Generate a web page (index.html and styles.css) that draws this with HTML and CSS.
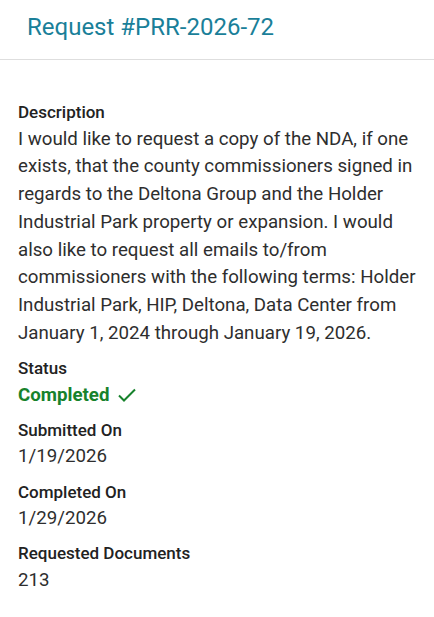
FILE: index.html
```html
<!DOCTYPE html>
<html>
<head>
<meta charset="utf-8">
<link rel="stylesheet" href="styles.css">
</head>
<body>
<header class="header">
  <h1 class="title">Request #PRR-2026-72</h1>
</header>
<main class="content">
  <div class="field">
    <div class="label">Description</div>
    <div class="value">I would like to request a copy of the NDA, if one exists, that the county commissioners signed in regards to the Deltona Group and the Holder Industrial Park property or expansion. I would also like to request all emails to/from commissioners with the following terms: Holder Industrial Park, HIP, Deltona, Data Center from January 1, 2024 through January 19, 2026.</div>
  </div>
  <div class="field">
    <div class="label">Status</div>
    <div class="value status">Completed
      <svg class="check" width="20" height="16" viewBox="0 0 20 16"><path d="M2 8.5 L7 13.5 L18 2.5" fill="none" stroke="#17822c" stroke-width="2"/></svg>
    </div>
  </div>
  <div class="field">
    <div class="label">Submitted On</div>
    <div class="value">1/19/2026</div>
  </div>
  <div class="field">
    <div class="label">Completed On</div>
    <div class="value">1/29/2026</div>
  </div>
  <div class="field">
    <div class="label">Requested Documents</div>
    <div class="value">213</div>
  </div>
</main>
</body>
</html>
```
FILE: styles.css
```css
html, body {
  margin: 0;
  padding: 0;
  background: #fff;
  font-family: Roboto, "Liberation Sans", sans-serif;
}
.header {
  height: 59px;
  border-bottom: 1px solid #dedede;
  display: flex;
  align-items: center;
  padding-left: 27px;
}
.title {
  margin: 0;
  font-size: 24px;
  font-weight: 400;
  color: #1a7f99;
  line-height: 1;
  margin-top: -6px;
}
.content {
  padding: 41px 18px 0 18px;
  display: flex;
  flex-direction: column;
  gap: 9.5px;
}
.field {
  display: flex;
  flex-direction: column;
  gap: 2.5px;
}
.label {
  font-size: 17px;
  font-weight: 500;
  color: #222;
  line-height: 22px;
}
.value {
  font-size: 18.7px;
  color: #2e2e2e;
  line-height: 27.75px;
}
.status {
  color: #17822c;
  font-weight: 700;
  display: flex;
  align-items: center;
  gap: 8px;
}
.check {
  display: block;
}
```
